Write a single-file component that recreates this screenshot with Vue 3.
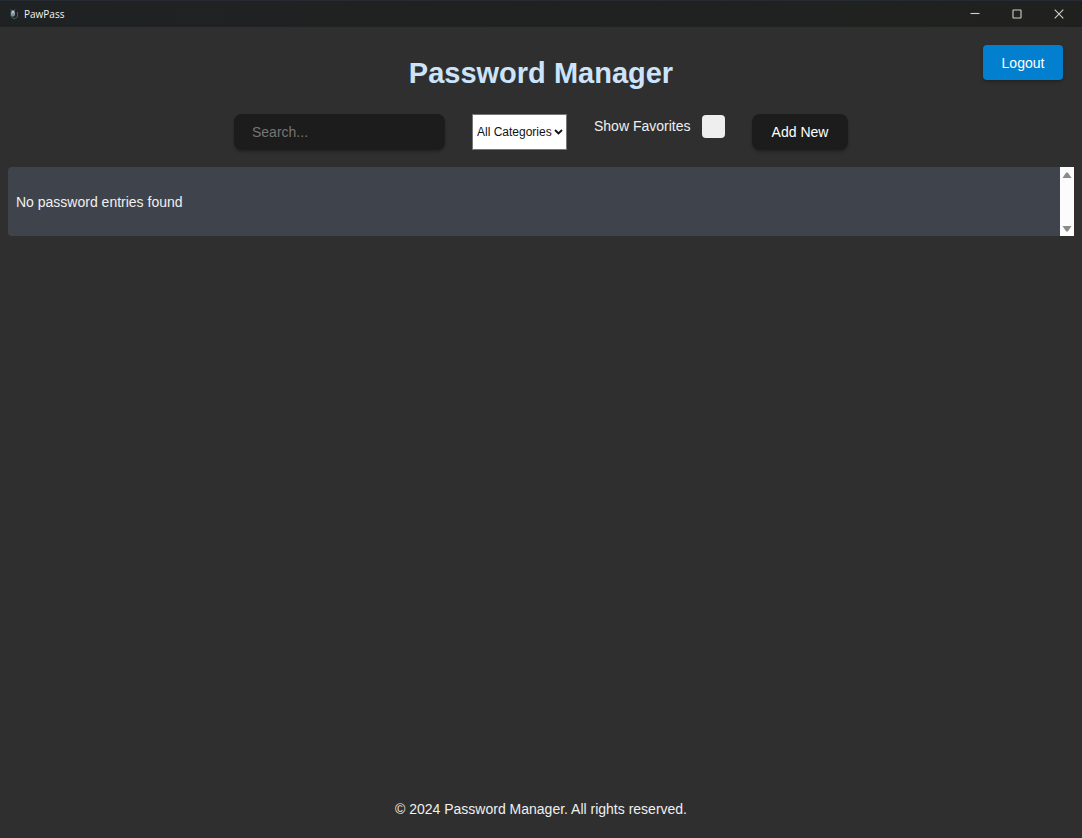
<script setup>
import { computed, ref } from 'vue'

const search = ref('')
const category = ref('all')
const favoritesOnly = ref(false)
const entries = ref([])

const visible = computed(() =>
  entries.value.filter(
    (e) =>
      e.name.toLowerCase().includes(search.value.toLowerCase()) &&
      (category.value === 'all' || e.category === category.value) &&
      (!favoritesOnly.value || e.favorite)
  )
)
</script>

<template>
  <div class="window">
    <div class="titlebar">
      <svg class="logo" width="10" height="12" viewBox="0 0 10 12" aria-hidden="true">
        <path d="M2 3.5V8.5L5 11L8.5 9V4" fill="none" stroke="#3c5f70" stroke-width="1" />
        <path d="M1.5 1.5L3 3H5L6 1.5" fill="none" stroke="#4c6a77" stroke-width="1" />
        <ellipse cx="4" cy="5.5" rx="1.8" ry="3" fill="#b4c6ce" />
        <path d="M4 5v3" stroke="#4a5a62" stroke-width="1" />
      </svg>
      <span class="app-name">PawPass</span>
      <div class="window-controls">
        <button type="button" aria-label="Minimize">
          <svg width="10" height="10" viewBox="0 0 10 10"><path d="M0.5 4.5H9.5" /></svg>
        </button>
        <button type="button" aria-label="Maximize">
          <svg width="10" height="10" viewBox="0 0 10 10"><rect x="1" y="1" width="8" height="8" rx="0.5" /></svg>
        </button>
        <button type="button" aria-label="Close">
          <svg width="10" height="10" viewBox="0 0 10 10"><path d="M0.7 0.7L9.3 9.3M9.3 0.7L0.7 9.3" /></svg>
        </button>
      </div>
    </div>

    <header class="header">
      <h1>Password Manager</h1>
      <button type="button" class="logout">Logout</button>
    </header>

    <div class="toolbar">
      <input v-model="search" class="search" type="text" placeholder="Search..." aria-label="Search" />
      <div class="category">
        <select v-model="category" aria-label="Category">
          <option value="all">All Categories</option>
        </select>
        <svg width="9" height="6" viewBox="0 0 9 6" aria-hidden="true"><path d="M1 1L4.5 4.5L8 1" /></svg>
      </div>
      <label class="favorites">
        Show Favorites
        <input v-model="favoritesOnly" type="checkbox" />
      </label>
      <button type="button" class="add">Add New</button>
    </div>

    <main class="panel">
      <div class="list">
        <p v-if="!visible.length">No password entries found</p>
        <p v-for="entry in visible" :key="entry.name">{{ entry.name }}</p>
      </div>
      <div class="scrollbar" aria-hidden="true">
        <svg width="10" height="6" viewBox="0 0 10 6"><path d="M0.5 6L4 0.8Q5 0 6 0.8L9.5 6Z" /></svg>
        <svg width="10" height="6" viewBox="0 0 10 6"><path d="M0.5 0L4 5.2Q5 6 6 5.2L9.5 0Z" /></svg>
      </div>
    </main>

    <footer class="footer">© 2024 Password Manager. All rights reserved.</footer>
  </div>
</template>

<style>
body {
  background: #2f2f2f;
}
</style>

<style scoped>
.window {
  box-sizing: border-box;
  display: flex;
  flex-direction: column;
  min-height: 100vh;
  background: #2f2f2f;
  color: #f0f0f0;
  font: 14px/18px "Liberation Sans", Arial, sans-serif;
}

button,
input,
select {
  box-sizing: border-box;
  margin: 0;
  font: inherit;
}

.titlebar {
  display: flex;
  align-items: center;
  box-sizing: border-box;
  height: 27px;
  padding: 0 2px 1px 9px;
  border-top: 1px solid #262a32;
  background: linear-gradient(90deg, #1f2223, #20211f);
}

.logo {
  margin-right: 5px;
}

.app-name {
  color: #f4f4f4;
  font: 10px/14px "Open Sans", "Noto Sans", sans-serif;
}

.window-controls {
  display: flex;
  align-self: stretch;
  margin-left: auto;
}

.window-controls button {
  display: flex;
  align-items: center;
  justify-content: center;
  width: 42px;
  padding: 0;
  border: 0;
  background: none;
}

.window-controls svg {
  fill: none;
  stroke: #d0d0cc;
  stroke-width: 1.1;
}

.header {
  position: relative;
  padding: 28px 8px 23px;
  text-align: center;
}

h1 {
  margin: 0;
  color: #cce4fb;
  font-size: 29px;
  line-height: 36px;
}

.logout {
  position: absolute;
  top: 18px;
  right: 19px;
  width: 80px;
  height: 35px;
  padding: 0;
  border: 0;
  border-radius: 4px;
  background: #027fce;
  box-shadow: 0 2px 3px rgba(0, 0, 0, 0.25);
  color: #fff;
}

.toolbar {
  display: flex;
  justify-content: center;
  gap: 27px;
  padding: 0 8px;
}

.search,
.add {
  height: 36px;
  border: 0;
  border-radius: 8px;
  background: #1c1c1c;
  box-shadow: 0 2px 3px rgba(0, 0, 0, 0.25);
  color: #fff;
}

.search {
  width: 211px;
  padding: 0 18px;
}

.search::placeholder {
  color: #757575;
  opacity: 1;
}

.category {
  position: relative;
}

.category select {
  width: 95px;
  height: 36px;
  padding: 0 0 0 4px;
  appearance: none;
  border: 1px solid #767676;
  border-radius: 0;
  background: #fff;
  color: #111;
  font-size: 12px;
}

.category svg {
  position: absolute;
  top: 15px;
  right: 4px;
  fill: none;
  stroke: #111;
  stroke-width: 1.8;
  pointer-events: none;
}

.favorites {
  display: flex;
  align-items: center;
  align-self: flex-start;
  justify-content: space-between;
  width: 131px;
  height: 24px;
}

.favorites input {
  width: 23px;
  height: 23px;
  appearance: none;
  border-radius: 4px;
  background: #eee;
}

.favorites input:checked {
  background: #027fce;
}

.add {
  width: 96px;
  padding: 0;
}

.panel {
  display: flex;
  margin: 17px 8px 0;
  overflow: hidden;
  border-radius: 4px 0 0 4px;
  background: #3f434c;
}

.list {
  flex: 1;
  padding: 12px 8px 11px;
}

.list p {
  margin: 14px 0;
}

.scrollbar {
  display: flex;
  flex-direction: column;
  align-items: center;
  justify-content: space-between;
  box-sizing: border-box;
  width: 14px;
  padding: 5px 0 4px;
  background: #fcfcfc;
}

.scrollbar svg {
  fill: #8b8b8b;
}

.footer {
  margin-top: auto;
  padding: 20px 8px;
  text-align: center;
}
</style>
